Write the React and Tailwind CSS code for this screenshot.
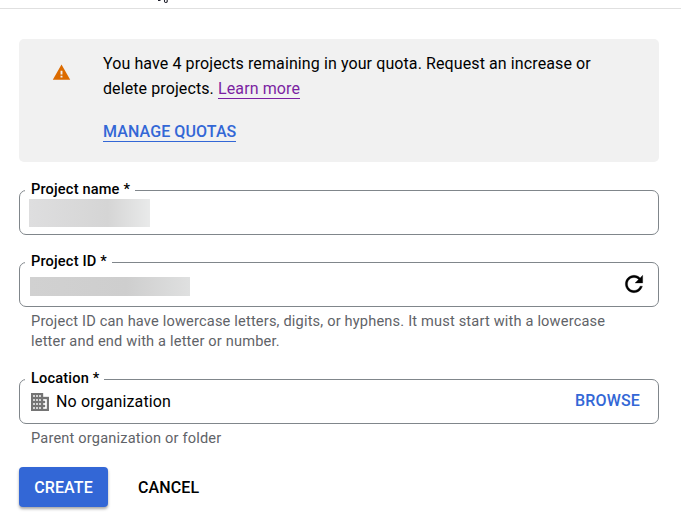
function Field({ label, className, children }) {
  return (
    <fieldset className={`ml-[19px] h-[54px] w-[640px] rounded-[7px] border border-[#80868b] ${className}`}>
      <legend className="ml-[5px] h-[19px] pr-[5px] pl-[6px] text-[14.6px] leading-[17px] font-medium tracking-[0.16px] whitespace-nowrap text-black">
        {label}
      </legend>
      {children}
    </fieldset>
  );
}

export default function App() {
  return (
    <main className="flex h-[527px] w-[681px] flex-col overflow-hidden bg-white font-['Roboto',sans-serif] text-black">
      <header className="h-[9px] shrink-0 border-b border-[#e0e0e0]">
        <svg className="ml-[157px] block h-[4px] w-[12px]" viewBox="0 0 12 4" fill="none" stroke="#20202c">
          <path d="M1 .5h2.5" />
          <path d="M7.5 0v1.5q.2 1 1.3 1t1.4-1V0" strokeWidth="1.1" />
        </svg>
      </header>

      <section className="mt-[30px] ml-[19px] flex h-[123px] w-[640px] shrink-0 rounded-[5px] bg-[#f1f1f1]">
        <svg className="mt-[24px] ml-[33px] h-[19px] w-[19px] shrink-0" viewBox="0 0 24 24" fill="#dc6b00">
          <path d="M1 21h22L12 2 1 21zm12.2-2.6h-2.4V16h2.4v2.4zm0-4h-2.4V9.8h2.4v4.6z" />
        </svg>
        <div className="mt-[12px] ml-[32px] text-[16px] leading-[25px] tracking-[0.1px] whitespace-nowrap">
          <p>You have 4 projects remaining in your quota. Request an increase or</p>
          <p>
            delete projects.{" "}
            <a className="inline-block h-[23px] border-b border-[#7b1fa2] leading-[25px] text-[#7b1fa2]">Learn more</a>
          </p>
          <a className="mt-[18px] inline-block h-[23px] border-b border-[#3367d6] leading-[25px] font-medium text-[#3367d6]">
            MANAGE QUOTAS
          </a>
        </div>
      </section>

      <Field label="Project name *" className="mt-[19px]">
        <div className="-mt-[1px] ml-[9px] h-[28px] w-[121px] bg-linear-to-r from-[#dededf] via-[#d5d5d5] via-65% to-[#e9eaea]" />
      </Field>

      <Field label="Project ID *" className="mt-[18px]">
        <div className="flex">
          <div className="mt-[5px] ml-[10px] h-[19px] w-[160px] bg-linear-to-r from-[#d1d1d1] via-[#cecece] via-60% to-[#dfe0e0]" />
          <svg className="-mt-[1px] ml-[431px] h-[26px] w-[26px]" viewBox="0 0 24 24" fill="black" stroke="black" strokeWidth="0.3">
            <path d="M17.65 6.35C16.2 4.9 14.21 4 12 4c-4.42 0-7.99 3.58-7.99 8s3.57 8 7.99 8c3.73 0 6.84-2.55 7.73-6h-2.08c-.82 2.33-3.04 4-5.65 4-3.31 0-6-2.69-6-6s2.69-6 6-6c1.66 0 3.14.69 4.22 1.78L13 11h7V4l-2.35 2.35z" />
          </svg>
        </div>
      </Field>
      <p className="mt-[4px] ml-[31px] text-[14.6px] leading-[20px] tracking-[0.175px] whitespace-nowrap text-[#5f6368]">
        Project ID can have lowercase letters, digits, or hyphens. It must start with a lowercase
        <br />
        letter and end with a letter or number.
      </p>

      <Field label="Location *" className="mt-[19px]">
        <div className="flex items-center">
          <svg className="ml-[11px] h-[18px] w-[18px]" viewBox="0 0 18 18" fill="#757575" fillRule="evenodd" stroke="#757575" strokeWidth="0.35">
            <path d="M0 0h12v4h6v14H0zM2 2v2h2V2zM5 2v2h2V2zM8 2v2h2V2zM2 6v2h2V6zM5 6v2h2V6zM8 6v2h2V6zM2 10v2h2v-2zM5 10v2h2v-2zM8 10v2h2v-2zM2 14v2h2v-2zM5 14v2h2v-2zM8 14v2h2v-2zM12 6v2h2v2h-2v2h2v2h-2v2h4V6z" />
          </svg>
          <span className="mt-[1px] ml-[7px] text-[16px] leading-[24px] tracking-[0.13px]">No organization</span>
          <span className="mr-[18px] ml-auto -mt-[1px] text-[16px] leading-[24px] font-medium tracking-[0.15px] text-[#3367d6]">BROWSE</span>
        </div>
      </Field>
      <p className="mt-[4px] ml-[31px] text-[14.6px] leading-[20px] tracking-[0.18px] text-[#5f6368]">Parent organization or folder</p>

      <div className="mt-[19px] ml-[19px] flex h-[40px] shrink-0 items-center text-[16px] font-medium tracking-[0.1px]">
        <button className="h-[40px] w-[89px] rounded-[4px] bg-[#3367d6] pt-[1px] text-white shadow-[0_2px_3px_rgba(0,0,0,0.35)]">CREATE</button>
        <button className="ml-[30px] pt-[2px]">CANCEL</button>
      </div>
    </main>
  );
}
